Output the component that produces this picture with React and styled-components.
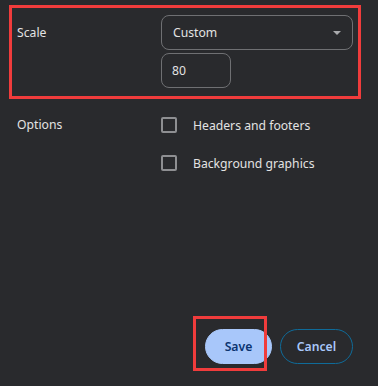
import React from 'react';
import styled, { createGlobalStyle } from 'styled-components';

const GlobalStyle = createGlobalStyle`
  html, body {
    margin: 0;
    padding: 0;
    background: #292a2d;
  }
  body {
    font-family: 'Noto Sans', 'Open Sans', sans-serif;
    font-size: 12.2px;
    color: #e3e3e3;
  }
`;

const Page = styled.div`
  display: flex;
  flex-direction: column;
  height: 386px;
  box-sizing: border-box;
  padding: 5px 0 22px 9px;
`;

const Section = styled.div`
  display: grid;
  grid-template-columns: 144px 192px;
  align-items: start;
  box-sizing: border-box;
  width: ${(p) => (p.$highlight ? '352px' : 'auto')};
  border: 3px solid ${(p) => (p.$highlight ? '#f03c3c' : 'transparent')};
  padding: ${(p) => (p.$highlight ? '7px 5px 8px 5px' : '12px 5px 0 5px')};
`;

const Label = styled.div`
  height: ${(p) => p.$rowHeight}px;
  line-height: ${(p) => p.$rowHeight}px;
`;

const Controls = styled.div`
  display: flex;
  flex-direction: column;
  gap: ${(p) => p.$gap}px;
`;

const Select = styled.div`
  display: flex;
  align-items: center;
  justify-content: space-between;
  box-sizing: border-box;
  height: 35px;
  padding: 0 11px 0 11px;
  border: 1px solid #6f7073;
  border-radius: 8px;
`;

const Arrow = styled.div`
  width: 0;
  height: 0;
  border-left: 4px solid transparent;
  border-right: 4px solid transparent;
  border-top: 4px solid #a9aaad;
  margin-top: 1px;
`;

const NumberBox = styled.div`
  display: flex;
  align-items: center;
  box-sizing: border-box;
  width: 70px;
  height: 35px;
  padding: 0 10px;
  border: 1px solid #6f7073;
  border-radius: 8px;
`;

const CheckRow = styled.label`
  display: flex;
  align-items: center;
  gap: 16px;
  height: 22px;
`;

const Box = styled.span`
  box-sizing: border-box;
  width: 16px;
  height: 16px;
  border: 2px solid #8e8f92;
  border-radius: 2px;
`;

const Footer = styled.div`
  margin-top: auto;
  display: flex;
  justify-content: flex-end;
  gap: 8px;
  padding-right: 25px;
`;

const Button = styled.button`
  position: relative;
  box-sizing: border-box;
  width: ${(p) => (p.$primary ? '67px' : '73px')};
  height: 35px;
  padding: 0;
  border-radius: 18px;
  font-family: 'Noto Sans', 'Open Sans', sans-serif;
  font-size: 12.2px;
  font-weight: 600;
  border: 1px solid ${(p) => (p.$primary ? '#a8c7fa' : '#0f6b99')};
  background: ${(p) => (p.$primary ? '#a8c7fa' : 'transparent')};
  color: ${(p) => (p.$primary ? '#0b3470' : '#a8c7fa')};
  cursor: pointer;
`;

const Marker = styled.span`
  position: absolute;
  left: -13px;
  top: -14px;
  width: 74px;
  height: 55px;
  box-sizing: border-box;
  border: 3px solid #f03c3c;
  pointer-events: none;
`;

export default function App() {
  return (
    <>
      <GlobalStyle />
      <Page>
        <Section $highlight>
          <Label $rowHeight={35}>Scale</Label>
          <Controls $gap={3}>
            <Select>
              <span>Custom</span>
              <Arrow />
            </Select>
            <NumberBox>80</NumberBox>
          </Controls>
        </Section>
        <Section>
          <Label $rowHeight={22}>Options</Label>
          <Controls $gap={16}>
            <CheckRow>
              <Box />
              Headers and footers
            </CheckRow>
            <CheckRow>
              <Box />
              Background graphics
            </CheckRow>
          </Controls>
        </Section>
        <Footer>
          <Button $primary>
            Save
            <Marker />
          </Button>
          <Button>Cancel</Button>
        </Footer>
      </Page>
    </>
  );
}
